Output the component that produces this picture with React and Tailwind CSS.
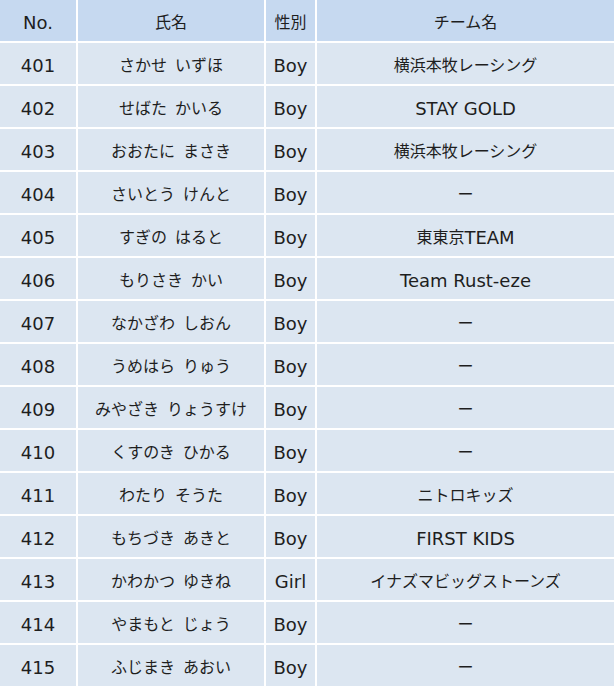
const rows = [
  ["401", "さかせ\u2002いずほ", "Boy", "横浜本牧レーシング"],
  ["402", "せばた\u2002かいる", "Boy", "STAY GOLD"],
  ["403", "おおたに\u2002まさき", "Boy", "横浜本牧レーシング"],
  ["404", "さいとう\u2002けんと", "Boy", "ー"],
  ["405", "すぎの\u2002はると", "Boy", "東東京TEAM"],
  ["406", "もりさき\u2002かい", "Boy", "Team Rust-eze"],
  ["407", "なかざわ\u2002しおん", "Boy", "ー"],
  ["408", "うめはら\u2002りゅう", "Boy", "ー"],
  ["409", "みやざき\u2002りょうすけ", "Boy", "ー"],
  ["410", "くすのき\u2002ひかる", "Boy", "ー"],
  ["411", "わたり\u2002そうた", "Boy", "ニトロキッズ"],
  ["412", "もちづき\u2002あきと", "Boy", "FIRST KIDS"],
  ["413", "かわかつ\u2002ゆきね", "Girl", "イナズマビッグストーンズ"],
  ["414", "やまもと\u2002じょう", "Boy", "ー"],
  ["415", "ふじまき\u2002あおい", "Boy", "ー"],
];

const head = ["No.", "氏名", "性別", "チーム名"];

// split into runs of latin / japanese so each gets its own font + size
function Text({ value }) {
  const parts = value.match(/[\x20-\x7e]+|[^\x20-\x7e]+/g) || [];
  return parts.map((p, i) =>
    /^[\x20-\x7e]+$/.test(p) ? (
      <span key={i} className="relative top-[2px] text-[18px] font-['DejaVu_Sans',sans-serif]">
        {p}
      </span>
    ) : (
      <span key={i} className="text-[16px] font-['Noto_Sans_CJK_JP',sans-serif]">
        {p}
      </span>
    )
  );
}

export default function App() {
  return (
    <div className="bg-white w-[614px] pb-[3px] text-[#1e1e1e]">
      <div className="grid grid-cols-[76px_186px_49px_1fr] gap-[2px] bg-white">
        {head.map((h) => (
          <div
            key={h}
            className="h-[41px] bg-[#c6d9f0] flex items-center justify-center whitespace-pre"
          >
            <Text value={h} />
          </div>
        ))}
        {rows.map((r) =>
          r.map((c, i) => (
            <div
              key={r[0] + i}
              className="h-[41px] bg-[#dce6f1] flex items-center justify-center whitespace-pre"
            >
              <Text value={c} />
            </div>
          ))
        )}
      </div>
    </div>
  );
}
